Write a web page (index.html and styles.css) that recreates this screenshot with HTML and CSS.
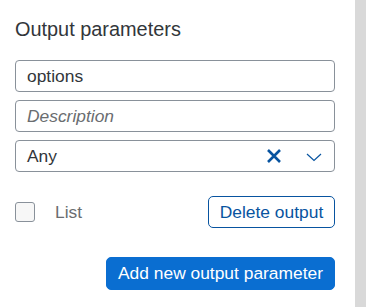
FILE: index.html
```html
<!DOCTYPE html>
<html>
<head>
<meta charset="utf-8">
<link rel="stylesheet" href="styles.css">
</head>
<body>
<div class="layout">
  <div class="panel">
    <h2 class="title">Output parameters</h2>
    <div class="fields">
      <div class="field"><span class="value">options</span></div>
      <div class="field"><span class="placeholder">Description</span></div>
      <div class="field select">
        <span class="value">Any</span>
        <span class="icons">
          <svg class="clear" width="16" height="16" viewBox="0 0 16 16"><path d="M2 2 L14 14 M14 2 L2 14" stroke="#0854a0" stroke-width="2.6" fill="none"/></svg>
          <svg class="chev" width="16" height="10" viewBox="0 0 16 10"><path d="M1 2 L8 8.5 L15 2" stroke="#0854a0" stroke-width="1.2" fill="none"/></svg>
        </span>
      </div>
    </div>
    <div class="row">
      <label class="check"><span class="box"></span><span class="label">List</span></label>
      <button class="btn ghost">Delete output</button>
    </div>
    <div class="actions">
      <button class="btn primary">Add new output parameter</button>
    </div>
  </div>
  <div class="sidebar"></div>
</div>
</body>
</html>
```
FILE: styles.css
```css
html, body {
  margin: 0;
  padding: 0;
  background: #ffffff;
  font-family: "Liberation Sans", Arial, sans-serif;
  color: #32363a;
}
.layout {
  display: flex;
  height: 307px;
}
.panel {
  width: 320px;
  padding: 17px 20px 0 15px;
}
.sidebar {
  flex: 1;
  background: #d9d9d9;
}
.title {
  margin: 0;
  font-size: 19.9px;
  font-weight: normal;
  line-height: 24px;
  color: #32363a;
}
.fields {
  margin-top: 19px;
  display: flex;
  flex-direction: column;
  gap: 8px;
}
.field {
  box-sizing: border-box;
  height: 32px;
  border: 1px solid #89919a;
  border-radius: 4px;
  display: flex;
  align-items: center;
  padding: 0 12px 0 11px;
  font-size: 17.4px;
}
.value { color: #32363a; }
.placeholder { color: #6a6d70; font-style: italic; }
.select { justify-content: space-between; }
.icons {
  display: flex;
  align-items: center;
}
.clear { margin-right: 24px; }
.chev { margin-top: 2px; }
.row {
  margin-top: 24px;
  display: flex;
  align-items: center;
  justify-content: space-between;
}
.check {
  display: flex;
  align-items: center;
}
.box {
  box-sizing: border-box;
  width: 20px;
  height: 20px;
  border: 1px solid #89919a;
  border-radius: 3px;
  background: #f7f7f7;
}
.label {
  margin-left: 20px;
  font-size: 17.4px;
  color: #6a6d70;
}
.btn {
  box-sizing: border-box;
  height: 32px;
  border-radius: 5px;
  font-family: "Liberation Sans", Arial, sans-serif;
  font-size: 17.4px;
  padding: 0 8px;
  cursor: pointer;
}
.ghost {
  width: 127px;
  background: #ffffff;
  border: 1px solid #0854a0;
  color: #0854a0;
}
.actions {
  margin-top: 29px;
  display: flex;
  justify-content: flex-end;
}
.primary {
  width: 229px;
  height: 33px;
  background: #0a6ed1;
  border: 1px solid #0a6ed1;
  color: #ffffff;
}
```
